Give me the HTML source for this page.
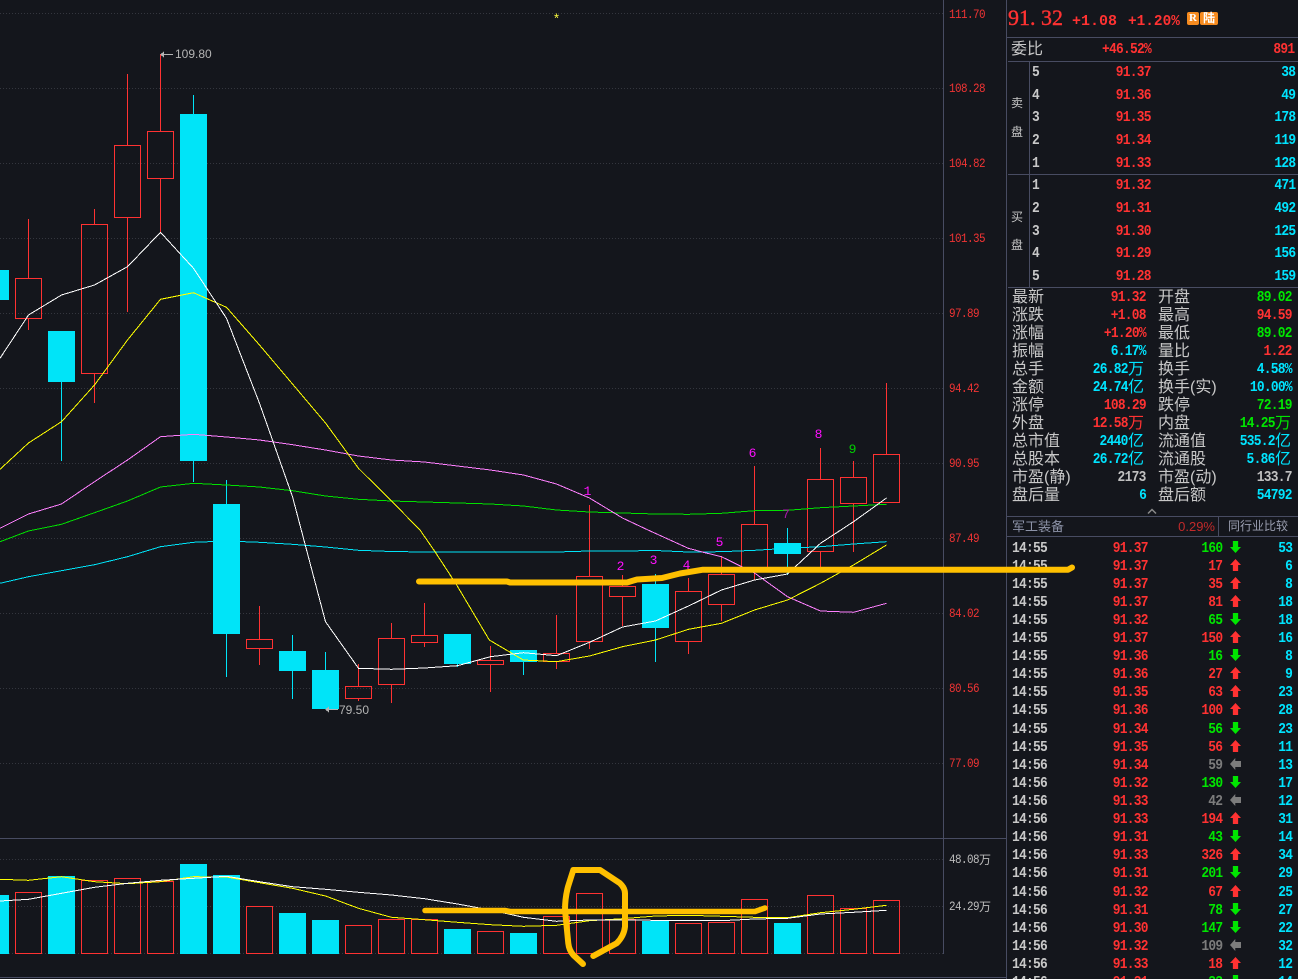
<!DOCTYPE html>
<html lang="zh">
<head>
<meta charset="utf-8">
<title>K线图</title>
<style>
html,body{margin:0;padding:0;background:#14161c}
#p{position:relative;width:1298px;height:979px;overflow:hidden;background:#14161c;font-family:"Liberation Sans","Noto Sans CJK SC",sans-serif;color:#c8c8c8}
svg{position:absolute;left:0;top:0}
.r{position:absolute;left:0;width:1298px;height:14px}
.r i,.t{position:absolute;font:bold 15px/14px "Liberation Mono",monospace;letter-spacing:-.86px;white-space:pre;transform:scaleX(.86);transform-origin:100% 50%;top:2px}
.r b{position:absolute;top:1px;font:normal 16px/16px "Liberation Sans","Noto Sans CJK SC",sans-serif;white-space:pre}
.r em{position:absolute;top:1px;left:1230px;width:11px;height:12px}
.u{background:#ff3232;clip-path:polygon(50% 0,100% 50%,74% 50%,74% 100%,26% 100%,26% 50%,0 50%)}
.d{background:#00e600;clip-path:polygon(26% 0,74% 0,74% 50%,100% 50%,50% 100%,0 50%,26% 50%)}
.w{background:#7c7c7c;clip-path:polygon(0 50%,48% 0,48% 25%,100% 25%,100% 75%,48% 75%,48% 100%)}
.tm{left:1012px;transform-origin:0 50%!important;color:#c8c8c8}
.pr{right:150px;color:#ff3232}
.vo{right:75.5px}
.la{right:5.5px;color:#00e4ff}
.no{left:1032px;transform-origin:0 50%!important;color:#c8c8c8}
.op{right:147.5px;color:#ff3232}
.ov{right:2.5px;color:#00e4ff}
.v1{right:152px}.v2{right:6px}.w1{right:170px}.w2{right:23px}
.l1{left:1012px}.l2{left:1158px}.s1{left:1128px}.s2{left:1275px}
.R{color:#ff3232}.G{color:#00e600}.C{color:#00e4ff}.H{color:#c0c0c0}.M{color:#7c7c7c}
.ax{position:absolute;left:949px;margin-top:1px;font:normal 13px/12px "Liberation Mono",monospace;letter-spacing:-.66px;color:#f03434;transform:scaleX(.84);transform-origin:0 50%;white-space:pre}
.ag{color:#bcbcbc}
.nm{position:absolute;font:normal 13px/12px "Liberation Mono",monospace;color:#ff10ff;transform:translate(-50%,-50%)}
.ch{position:absolute;font:normal 12px/14px "Liberation Sans",sans-serif;color:#b4b4b4}
</style>
</head>
<body>
<div id="p">

<svg width="1298" height="979" viewBox="0 0 1298 979" shape-rendering="crispEdges" fill="none">
  <g stroke="#34363e" stroke-dasharray="1 2">
    <path d="M0 13.5H943M0 88.5H943M0 163.5H943M0 238.5H943M0 313.5H943M0 388.5H943M0 463.5H943M0 538.5H943M0 613.5H943M0 688.5H943M0 763.5H943M0 859.5H943M0 906.5H943M0 953.5H943"/>
  </g>
  <g stroke="#484c62">
    <path d="M943.5 0V954M0 838.5H1006M0 977.5H1006M1006.5 0V979"/>
    <path d="M1007 37.5H1298M1008 61.5H1298M1008 174.5H1298M1008 287.5H1298M1029.5 61V287M1007 516.5H1298M1007 536.5H1298M1218.5 517V536"/>
  </g>

  <!-- main candles: wicks -->
  <path stroke="#ff3232" d="M28.5 219V278M28.5 318V330M94.5 209V224M94.5 373V403M127.5 74V145M127.5 217V312M160.5 54V131M160.5 178V232M259.5 606V639M259.5 648V665M358.5 664V686M358.5 698V701M391.5 623V638M391.5 684V703M424.5 603V635M424.5 643V647M490.5 646V660M490.5 665V692M556.5 615V653M556.5 661V669M589.5 505V576M589.5 641V649M622.5 575V586M622.5 597V626M688.5 578V591M688.5 641V654M721.5 556V574M721.5 604V621M754.5 466V524M754.5 570V580M820.5 448V479M820.5 551V570M853.5 461V477M853.5 503V552M886.5 383V454"/>
  <path stroke="#00e4f8" d="M61.5 381V461M193.5 95V114M193.5 461V482M226.5 480V504M226.5 634V677M292.5 635V651M292.5 671V699M325.5 652V670M457.5 664V667M523.5 662V675M655.5 574V584M655.5 628V662M787.5 528V543M787.5 554V575"/>
  <!-- main candles: red bodies -->
  <g stroke="#ff3232">
    <rect x="15.5" y="278.5" width="26" height="40"/>
    <rect x="81.5" y="224.5" width="26" height="149"/>
    <rect x="114.5" y="145.5" width="26" height="72"/>
    <rect x="147.5" y="131.5" width="26" height="47"/>
    <rect x="246.5" y="639.5" width="26" height="9"/>
    <rect x="345.5" y="686.5" width="26" height="12"/>
    <rect x="378.5" y="638.5" width="26" height="46"/>
    <rect x="411.5" y="635.5" width="26" height="7"/>
    <rect x="477.5" y="660.5" width="26" height="4"/>
    <rect x="543.5" y="653.5" width="26" height="8"/>
    <rect x="576.5" y="576.5" width="26" height="65"/>
    <rect x="609.5" y="586.5" width="26" height="10"/>
    <rect x="675.5" y="591.5" width="26" height="50"/>
    <rect x="708.5" y="574.5" width="26" height="30"/>
    <rect x="741.5" y="524.5" width="26" height="46"/>
    <rect x="807.5" y="479.5" width="26" height="72"/>
    <rect x="840.5" y="477.5" width="26" height="26"/>
    <rect x="873.5" y="454.5" width="26" height="48"/>
  </g>
  <!-- main candles: cyan bodies -->
  <g fill="#00e4f8">
    <rect x="0" y="270" width="9" height="30"/>
    <rect x="48" y="331" width="27" height="51"/>
    <rect x="180" y="114" width="27" height="347"/>
    <rect x="213" y="504" width="27" height="130"/>
    <rect x="279" y="651" width="27" height="20"/>
    <rect x="312" y="670" width="27" height="39"/>
    <rect x="444" y="634" width="27" height="30"/>
    <rect x="510" y="650" width="27" height="12"/>
    <rect x="642" y="584" width="27" height="44"/>
    <rect x="774" y="543" width="27" height="11"/>
  </g>

  <!-- moving averages -->
  <polyline stroke="#00e4f8" points="0,583.3 28.5,576.7 61.5,570.7 94.5,564.7 127.5,556.7 160.5,546.7 193.5,542.3 226.5,541 259.5,542.3 292.5,544.3 325.5,547 358.5,550.3 391.5,551.5 424.5,552 457.5,552 490.5,552 523.5,552 556.5,552 589.5,551 622.5,551 655.5,550.5 688.5,552 721.5,551.7 754.5,550.3 787.5,548.3 820.5,546.7 853.5,544 886.5,541.7"/>
  <polyline stroke="#00e000" points="0,541.7 28.5,531 61.5,524.3 94.5,512.7 127.5,501 160.5,487 193.5,483.3 226.5,485 259.5,487 292.5,490.7 325.5,496 358.5,499.3 391.5,501 424.5,502 457.5,503 490.5,504 523.5,506 556.5,510 589.5,512 622.5,513 655.5,514 688.5,514.3 721.5,513.3 754.5,510.7 787.5,510.3 820.5,507.7 853.5,506 886.5,504.3"/>
  <polyline stroke="#ff80ff" points="0,528.3 28.5,514 61.5,504 94.5,481.7 127.5,460 160.5,436.7 193.5,434.3 226.5,437 259.5,440 292.5,444.7 325.5,450 358.5,456 391.5,460 424.5,462 457.5,466 490.5,470 523.5,475 556.5,484 589.5,498 622.5,518 648,530 688.3,548.3 705,552.7 721.5,556.7 754.5,573 787.5,596.7 820.5,611 853.5,612.3 886.5,603.3"/>
  <polyline stroke="#ffff00" points="0,469.3 28.5,443 61.5,421.7 94.5,385 127.5,340 160.5,299.3 193.5,292.7 226.5,307.3 259.5,345 292.5,384 325.5,423 358.5,468.3 391.5,501 420,530 435,551.7 456.7,585 489.3,640 523.3,660 556.3,661.7 589.5,656 622.5,646.7 655.5,640 688.5,629.3 721.5,623.3 754.5,610 787.5,600 820.5,583.3 853.5,565 886.5,545"/>
  <polyline stroke="#ffffff" points="0,358.3 28.5,315 61.5,295 94.5,285 127.5,266.7 160.5,232.3 193.5,268.3 226.5,318.3 259.5,403.3 292.5,496.7 325.5,621.7 358.5,668.3 391.5,669.3 424.5,668 457.5,665.7 490.5,656.7 523.5,652.7 556.5,655.7 589.5,642.3 622.5,627 655.5,621 688.5,606 721.5,590 754.5,580 787.5,574 820.5,543.3 853.5,521.7 886.5,498"/>

  <!-- extreme markers -->
  <path stroke="#b4b4b4" d="M162 54.5H173M328 709.5H338"/>
  <path fill="#b4b4b4" d="M160 54.5l4-3v6zM325 709.5l4-3v6z"/>

  <!-- volume bars -->
  <g stroke="#ff3232">
    <rect x="15.5" y="892.5" width="26" height="61"/>
    <rect x="81.5" y="880.5" width="26" height="73"/>
    <rect x="114.5" y="878.5" width="26" height="75"/>
    <rect x="147.5" y="881.5" width="26" height="72"/>
    <rect x="246.5" y="906.5" width="26" height="47"/>
    <rect x="345.5" y="925.5" width="26" height="28"/>
    <rect x="378.5" y="919.5" width="26" height="34"/>
    <rect x="411.5" y="919.5" width="26" height="34"/>
    <rect x="477.5" y="931.5" width="26" height="22"/>
    <rect x="543.5" y="916.5" width="26" height="37"/>
    <rect x="576.5" y="893.5" width="26" height="60"/>
    <rect x="609.5" y="919.5" width="26" height="34"/>
    <rect x="675.5" y="923.5" width="26" height="30"/>
    <rect x="708.5" y="922.5" width="26" height="31"/>
    <rect x="741.5" y="899.5" width="26" height="54"/>
    <rect x="807.5" y="895.5" width="26" height="58"/>
    <rect x="840.5" y="908.5" width="26" height="45"/>
    <rect x="873.5" y="900.5" width="26" height="53"/>
  </g>
  <g fill="#00e4f8">
    <rect x="0" y="895" width="9" height="59"/>
    <rect x="48" y="876" width="27" height="78"/>
    <rect x="180" y="864" width="27" height="90"/>
    <rect x="213" y="875" width="27" height="79"/>
    <rect x="279" y="913" width="27" height="41"/>
    <rect x="312" y="920" width="27" height="34"/>
    <rect x="444" y="929" width="27" height="25"/>
    <rect x="510" y="933" width="27" height="21"/>
    <rect x="642" y="921" width="27" height="33"/>
    <rect x="774" y="923" width="27" height="31"/>
  </g>
  <polyline stroke="#ffff00" points="0,879.3 28.5,880.3 61.5,876.7 94.5,881.7 127.5,883.7 160.5,881.7 193.5,876.7 226.5,877 259.5,882.7 292.5,888.3 325.5,896 358.5,908.3 391.5,917.3 424.5,919.7 457.5,922.3 490.5,924.7 523.5,926.3 556.5,925.3 589.5,920.7 622.5,918.7 655.5,916 688.5,915.3 721.5,916.3 754.5,917.3 787.5,917.7 820.5,912.7 853.5,909.3 886.5,905.3"/>
  <polyline stroke="#ffffff" points="0,901 28.5,899.3 61.5,893.3 94.5,887.3 127.5,883.3 160.5,880.3 193.5,878.3 226.5,876.3 259.5,881.7 292.5,886.7 325.5,889.3 358.5,892.3 391.5,895 424.5,898.7 457.5,904 490.5,910 523.5,917.3 556.5,921.3 589.5,920 622.5,920 655.5,920.3 688.5,920.3 721.5,920.7 754.5,919 787.5,918.3 820.5,914 853.5,912.3 886.5,910.3"/>

  <!-- chevron -->
  <path stroke="#8a8a8a" stroke-width="1.5" d="M1148 513.5l4-4 4 4" shape-rendering="auto"/>
</svg>

<!-- price axis -->
<div class="ax" style="top:8px">111.70</div>
<div class="ax" style="top:82px">108.28</div>
<div class="ax" style="top:157px">104.82</div>
<div class="ax" style="top:232px">101.35</div>
<div class="ax" style="top:307px">97.89</div>
<div class="ax" style="top:382px">94.42</div>
<div class="ax" style="top:457px">90.95</div>
<div class="ax" style="top:532px">87.49</div>
<div class="ax" style="top:607px">84.02</div>
<div class="ax" style="top:682px">80.56</div>
<div class="ax" style="top:757px">77.09</div>
<div class="ax ag" style="top:853px">48.08</div>
<div class="ax ag" style="top:900px">24.29</div>
<div class="ax ag" style="left:979px;top:853px;font-family:'Liberation Sans','Noto Sans CJK SC',sans-serif;font-size:12px;letter-spacing:0;transform:none">万</div>
<div class="ax ag" style="left:979px;top:900px;font-family:'Liberation Sans','Noto Sans CJK SC',sans-serif;font-size:12px;letter-spacing:0;transform:none">万</div>

<!-- chart annotations -->
<div class="ch" style="left:175px;top:47px">109.80</div>
<div class="ch" style="left:339px;top:703px">79.50</div>
<div class="nm" style="left:587.5px;top:492px">1</div>
<div class="nm" style="left:620.5px;top:567px">2</div>
<div class="nm" style="left:653.5px;top:561px">3</div>
<div class="nm" style="left:686.5px;top:566px">4</div>
<div class="nm" style="left:719.5px;top:543px">5</div>
<div class="nm" style="left:752.5px;top:454px">6</div>
<div class="nm" style="left:786px;top:515px;color:#a818a8">7</div>
<div class="nm" style="left:818.5px;top:435px">8</div>
<div class="nm" style="left:852.5px;top:450px;color:#00d000">9</div>
<div class="nm" style="left:556.5px;top:20px;color:#ffff40">*</div>

<!-- header -->
<div style="position:absolute;left:1008px;top:6px;font:normal 22px/24px 'Liberation Serif',serif;-webkit-text-stroke:.4px #ff3232;color:#ff3232;white-space:pre">91.<span style="margin-left:5.5px">32</span></div>
<div style="position:absolute;left:1072px;top:14px;font:bold 15px/16px 'Liberation Mono',monospace;color:#ff3232;white-space:pre">+1.08</div>
<div style="position:absolute;left:1128px;top:14px;font:bold 15px/16px 'Liberation Mono',monospace;color:#ff3232;white-space:pre;transform:scaleX(.96);transform-origin:0 50%">+1.20%</div>
<div style="position:absolute;left:1187px;top:12px;width:12px;height:13px;background:#f68b1f;border-radius:2px;color:#fff;font:bold 11px/13px 'Liberation Serif',serif;text-align:center">R</div>
<div style="position:absolute;left:1200px;top:12px;width:18px;height:13px;background:#f68b1f;border-radius:2px;color:#fff;font:bold 12px/13px 'Liberation Sans','Noto Sans CJK SC',sans-serif;text-align:center">陆</div>

<!-- order book -->
<div class="r" style="top:41px"><b style="left:1011px">委比</b><i class="R" style="right:147px">+46.52%</i><i class="R" style="right:4px">891</i></div>
<div class="r" style="top:64px"><i class="no">5</i><i class="op">91.37</i><i class="ov">38</i></div>
<div class="r" style="top:87px"><i class="no">4</i><i class="op">91.36</i><i class="ov">49</i></div>
<div class="r" style="top:109px"><i class="no">3</i><i class="op">91.35</i><i class="ov">178</i></div>
<div class="r" style="top:132px"><i class="no">2</i><i class="op">91.34</i><i class="ov">119</i></div>
<div class="r" style="top:155px"><i class="no">1</i><i class="op">91.33</i><i class="ov">128</i></div>
<div class="r" style="top:177px"><i class="no">1</i><i class="op">91.32</i><i class="ov">471</i></div>
<div class="r" style="top:200px"><i class="no">2</i><i class="op">91.31</i><i class="ov">492</i></div>
<div class="r" style="top:223px"><i class="no">3</i><i class="op">91.30</i><i class="ov">125</i></div>
<div class="r" style="top:245px"><i class="no">4</i><i class="op">91.29</i><i class="ov">156</i></div>
<div class="r" style="top:268px"><i class="no">5</i><i class="op">91.28</i><i class="ov">159</i></div>
<div style="position:absolute;left:1011px;top:96px;font-size:12px;line-height:14px">卖</div>
<div style="position:absolute;left:1011px;top:125px;font-size:12px;line-height:14px">盘</div>
<div style="position:absolute;left:1011px;top:210px;font-size:12px;line-height:14px">买</div>
<div style="position:absolute;left:1011px;top:238px;font-size:12px;line-height:14px">盘</div>

<!-- stats -->
<div class="r" style="top:289px"><b class="l1">最新</b><i class="v1 R">91.32</i><b class="l2">开盘</b><i class="v2 G">89.02</i></div>
<div class="r" style="top:307px"><b class="l1">涨跌</b><i class="v1 R">+1.08</i><b class="l2">最高</b><i class="v2 R">94.59</i></div>
<div class="r" style="top:325px"><b class="l1">涨幅</b><i class="v1 R">+1.20%</i><b class="l2">最低</b><i class="v2 G">89.02</i></div>
<div class="r" style="top:343px"><b class="l1">振幅</b><i class="v1 C">6.17%</i><b class="l2">量比</b><i class="v2 R">1.22</i></div>
<div class="r" style="top:361px"><b class="l1">总手</b><i class="w1 C">26.82</i><b class="s1 C">万</b><b class="l2">换手</b><i class="v2 C">4.58%</i></div>
<div class="r" style="top:379px"><b class="l1">金额</b><i class="w1 C">24.74</i><b class="s1 C">亿</b><b class="l2">换手(实)</b><i class="v2 C">10.00%</i></div>
<div class="r" style="top:397px"><b class="l1">涨停</b><i class="v1 R">108.29</i><b class="l2">跌停</b><i class="v2 G">72.19</i></div>
<div class="r" style="top:415px"><b class="l1">外盘</b><i class="w1 R">12.58</i><b class="s1 R">万</b><b class="l2">内盘</b><i class="w2 G">14.25</i><b class="s2 G">万</b></div>
<div class="r" style="top:433px"><b class="l1">总市值</b><i class="w1 C">2440</i><b class="s1 C">亿</b><b class="l2">流通值</b><i class="w2 C">535.2</i><b class="s2 C">亿</b></div>
<div class="r" style="top:451px"><b class="l1">总股本</b><i class="w1 C">26.72</i><b class="s1 C">亿</b><b class="l2">流通股</b><i class="w2 C">5.86</i><b class="s2 C">亿</b></div>
<div class="r" style="top:469px"><b class="l1">市盈(静)</b><i class="v1 H">2173</i><b class="l2">市盈(动)</b><i class="v2 H">133.7</i></div>
<div class="r" style="top:487px"><b class="l1">盘后量</b><i class="v1 C">6</i><b class="l2">盘后额</b><i class="v2 C">54792</i></div>

<!-- industry row -->
<div style="position:absolute;left:1012px;top:519px;font-size:13px;line-height:15px;color:#8d93a8">军工装备</div>
<div style="position:absolute;right:83px;top:519px;font:normal 13px/15px 'Liberation Sans',sans-serif;color:#c22a2a">0.29%</div>
<div style="position:absolute;left:1228px;top:519px;font-size:12px;line-height:15px;color:#9a9eb0">同行业比较</div>

<!-- ticks -->
<div class="r" style="top:540px"><i class="tm">14:55</i><i class="pr">91.37</i><i class="vo G">160</i><em class="d"></em><i class="la">53</i></div>
<div class="r" style="top:558px"><i class="tm">14:55</i><i class="pr">91.37</i><i class="vo R">17</i><em class="u"></em><i class="la">6</i></div>
<div class="r" style="top:576px"><i class="tm">14:55</i><i class="pr">91.37</i><i class="vo R">35</i><em class="u"></em><i class="la">8</i></div>
<div class="r" style="top:594px"><i class="tm">14:55</i><i class="pr">91.37</i><i class="vo R">81</i><em class="u"></em><i class="la">18</i></div>
<div class="r" style="top:612px"><i class="tm">14:55</i><i class="pr">91.32</i><i class="vo G">65</i><em class="d"></em><i class="la">18</i></div>
<div class="r" style="top:630px"><i class="tm">14:55</i><i class="pr">91.37</i><i class="vo R">150</i><em class="u"></em><i class="la">16</i></div>
<div class="r" style="top:648px"><i class="tm">14:55</i><i class="pr">91.36</i><i class="vo G">16</i><em class="d"></em><i class="la">8</i></div>
<div class="r" style="top:666px"><i class="tm">14:55</i><i class="pr">91.36</i><i class="vo R">27</i><em class="u"></em><i class="la">9</i></div>
<div class="r" style="top:684px"><i class="tm">14:55</i><i class="pr">91.35</i><i class="vo R">63</i><em class="u"></em><i class="la">23</i></div>
<div class="r" style="top:702px"><i class="tm">14:55</i><i class="pr">91.36</i><i class="vo R">100</i><em class="u"></em><i class="la">28</i></div>
<div class="r" style="top:721px"><i class="tm">14:55</i><i class="pr">91.34</i><i class="vo G">56</i><em class="d"></em><i class="la">23</i></div>
<div class="r" style="top:739px"><i class="tm">14:55</i><i class="pr">91.35</i><i class="vo R">56</i><em class="u"></em><i class="la">11</i></div>
<div class="r" style="top:757px"><i class="tm">14:56</i><i class="pr">91.34</i><i class="vo M">59</i><em class="w"></em><i class="la">13</i></div>
<div class="r" style="top:775px"><i class="tm">14:56</i><i class="pr">91.32</i><i class="vo G">130</i><em class="d"></em><i class="la">17</i></div>
<div class="r" style="top:793px"><i class="tm">14:56</i><i class="pr">91.33</i><i class="vo M">42</i><em class="w"></em><i class="la">12</i></div>
<div class="r" style="top:811px"><i class="tm">14:56</i><i class="pr">91.33</i><i class="vo R">194</i><em class="u"></em><i class="la">31</i></div>
<div class="r" style="top:829px"><i class="tm">14:56</i><i class="pr">91.31</i><i class="vo G">43</i><em class="d"></em><i class="la">14</i></div>
<div class="r" style="top:847px"><i class="tm">14:56</i><i class="pr">91.33</i><i class="vo R">326</i><em class="u"></em><i class="la">34</i></div>
<div class="r" style="top:865px"><i class="tm">14:56</i><i class="pr">91.31</i><i class="vo G">201</i><em class="d"></em><i class="la">29</i></div>
<div class="r" style="top:884px"><i class="tm">14:56</i><i class="pr">91.32</i><i class="vo R">67</i><em class="u"></em><i class="la">25</i></div>
<div class="r" style="top:902px"><i class="tm">14:56</i><i class="pr">91.31</i><i class="vo G">78</i><em class="d"></em><i class="la">27</i></div>
<div class="r" style="top:920px"><i class="tm">14:56</i><i class="pr">91.30</i><i class="vo G">147</i><em class="d"></em><i class="la">22</i></div>
<div class="r" style="top:938px"><i class="tm">14:56</i><i class="pr">91.32</i><i class="vo M">109</i><em class="w"></em><i class="la">32</i></div>
<div class="r" style="top:956px"><i class="tm">14:56</i><i class="pr">91.33</i><i class="vo R">18</i><em class="u"></em><i class="la">12</i></div>
<div class="r" style="top:974px"><i class="tm">14:56</i><i class="pr">91.31</i><i class="vo G">33</i><em class="d"></em><i class="la">14</i></div>

<!-- hand-drawn orange marks -->
<svg width="1298" height="979" viewBox="0 0 1298 979" fill="none" stroke="#ffc000" stroke-linecap="round" stroke-linejoin="round">
  <path stroke-width="6" d="M419 581.5H507L510 582.5H627L637 579.5L662 578L680 573.5L703 569.7H1068L1072 567.5"/>
  <path stroke-width="5.5" d="M425 910.5H505L510 911.5H755L765 908"/>
  <path stroke-width="6" d="M583 964L573.3 955Q569 950 568.3 943.3L565 910Q565 898 568 886.7L573.3 870H600L620 883.3Q625 888 625 893.3V926.7Q624 936 616.7 943.3L593.3 956"/>
</svg>

</div>
</body>
</html>
